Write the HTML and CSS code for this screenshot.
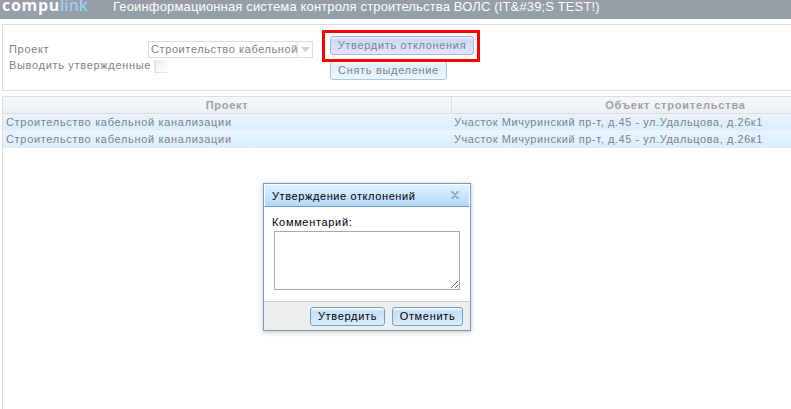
FILE: index.html
```html
<!DOCTYPE html>
<html lang="ru">
<head>
<meta charset="utf-8">
<title>Compulink</title>
<link rel="stylesheet" href="styles.css">
</head>
<body>
<header class="topbar">
  <div class="logo">compu<span>link</span></div>
  <div class="app-title">Геоинформационная система контроля строительства ВОЛС (IT&amp;#39;S TEST!)</div>
</header>
<main>
  <section class="filters">
    <div class="fields">
      <div class="field"><span class="field-label">Проект</span>
        <div class="select"><span class="select-value">Строительство кабельной</span><span class="select-arrow"><svg width="9" height="5" viewBox="0 0 9 5"><path d="M0 0H9L4.5 5Z" fill="#cbd0da"/></svg></span></div>
      </div>
      <div class="field check-field"><span>Выводить утвержденные</span><span class="checkbox"></span></div>
    </div>
    <div class="actions">
      <div class="highlight"><button class="action active">Утвердить отклонения</button></div>
      <button class="action clear">Снять выделение</button>
    </div>
  </section>
  <section class="grid">
    <div class="grid-row grid-head"><div class="cell">Проект</div><div class="cell">Объект строительства</div></div>
    <div class="grid-row"><div class="cell">Строительство кабельной канализации</div><div class="cell">Участок Мичуринский пр-т, д.45 - ул.Удальцова, д.26к1</div></div>
    <div class="grid-row"><div class="cell">Строительство кабельной канализации</div><div class="cell">Участок Мичуринский пр-т, д.45 - ул.Удальцова, д.26к1</div></div>
  </section>
</main>
<div class="dialog">
  <div class="dialog-title"><span>Утверждение отклонений</span>
    <svg class="close" width="8" height="8" viewBox="0 0 8 8"><path d="M1.5 1L6.5 7M6.5 1L1.5 7M0 1H2.5M5.5 1H8M0 7H2.5M5.5 7H8" stroke="#8da5b8" stroke-width="1.6" fill="none"/></svg>
  </div>
  <div class="dialog-body">
    <label for="comment">Комментарий:</label>
    <textarea id="comment"></textarea>
  </div>
  <div class="dialog-footer"><button>Утвердить</button><button>Отменить</button></div>
</div>
</body>
</html>
```
FILE: styles.css
```css
* { box-sizing: border-box; }
body {
  margin: 0;
  height: 409px;
  overflow: hidden;
  background: #fff;
  color: #808084;
  font: 11px/14px "Liberation Sans", Arial, sans-serif;
  letter-spacing: 0.68px;
}
button, textarea { font: inherit; letter-spacing: inherit; margin: 0; }
.topbar {
  display: flex;
  height: 19px;
  background: #969ea8;
  color: #fff;
  white-space: nowrap;
}
.logo {
  width: 111px;
  padding-left: 2px;
  font: bold 16px/11px "Open Sans", sans-serif;
  letter-spacing: 0.7px;
}
.logo span { color: #9bd0f0; font-weight: 600; letter-spacing: -0.1px; }
.app-title { padding-left: 2px; font-size: 13px; line-height: 14px; letter-spacing: 0.15px; }
main { padding: 5px 0 0 2px; }
.filters {
  display: flex;
  height: 67px;
  border: 1px solid #dadce3;
  border-right: 0;
}
.fields { width: 319px; padding: 16px 0 0 6px; }
.field { display: flex; height: 17px; white-space: nowrap; }
.field-label { width: 139px; padding-top: 1px; }
.select {
  display: flex;
  width: 165px;
  height: 17px;
  border: 1px solid #dadce3;
}
.select-value { width: 148px; padding-left: 2px; line-height: 15px; letter-spacing: 0.6px; overflow: hidden; }
.select-arrow { flex: 1; border-left: 1px solid #dadce3; padding: 5px 0 0 3px; }
.select-arrow svg { display: block; }
.checkbox {
  width: 13px;
  height: 13px;
  margin: 2px 0 0 3px;
  border: 2px solid #e1e3e7;
  border-width: 0 0 1px 2px;
  background: linear-gradient(135deg, #e4f0f8, #fff);
}
.highlight {
  position: relative;
  width: 158px;
  height: 32px;
  margin-top: 5px;
  padding: 3px 3px 3px 5px;
  border: 3px solid #fe0000;
}
.action {
  display: block;
  height: 19px;
  padding: 0;
  border: 1px solid #a9c7e4;
  border-radius: 3px;
  background: linear-gradient(#fff, #deeefa 20%, #edf7fe);
  color: #808084;
  line-height: 17px;
  white-space: nowrap;
}
.active {
  width: 144px;
  border-color: #a7b3e5;
  background: linear-gradient(#eeeeff, #d0d8fa 20%, #e0e5ff);
}
.clear { width: 117px; margin: -1px 0 0 8px; line-height: 15px; }
.grid {
  height: 330px;
  margin-top: 5px;
  border: 1px solid #dadce3;
  border-right: 0;
}
.grid-row {
  display: grid;
  grid-template-columns: 449px 1fr;
  height: 17px;
  border-bottom: 1px solid #ececec;
  background: linear-gradient(#e8f4ff, #dbeeff);
  line-height: 17px;
  white-space: nowrap;
}
.cell { padding-left: 3px; border-right: 1px solid #e5edf4; }
.cell:last-child { border-right: 0; padding-left: 2px; letter-spacing: 0.56px; }
.grid-head {
  background: linear-gradient(#f5f7fb, #ebeff4);
  border-bottom-color: #e2dcdb;
  color: #a0a0a4;
  font-weight: bold;
  text-align: center;
}
.grid-head .cell { border-color: #dadce3; padding: 0; }
.grid-head .cell:last-child { padding-left: 108px; letter-spacing: 0.8px; }
.dialog {
  position: absolute;
  left: 263px;
  top: 183px;
  width: 208px;
  height: 148px;
  border: 1px solid #769dc0;
  background: #fff;
  box-shadow: 0 1px 5px rgba(0, 0, 0, 0.25);
  color: #000;
  display: flex;
  flex-direction: column;
}
.dialog-title {
  display: flex;
  justify-content: space-between;
  height: 23px;
  padding: 4px 10px 0 7px;
  border: 1px solid #fff;
  border-bottom: 1px solid #769dc0;
  background: linear-gradient(#e1f1ff, #b1d8ff);
  line-height: 14px;
  letter-spacing: 0.6px;
  white-space: nowrap;
}
.close { margin-top: 2px; }
.dialog-body { height: 94px; padding: 8px 8px 0; }
.dialog-body label { display: block; }
.dialog-body textarea {
  display: block;
  width: 186px;
  height: 59px;
  margin: 2px 0 0 2px;
  border: 1px solid #a9a9a9;
  background: #fff;
}
.dialog-footer {
  flex: 1;
  display: flex;
  justify-content: flex-end;
  gap: 7px;
  padding: 5px 7px 0;
  border-top: 1px solid #d3d3d3;
  background: #eee;
}
.dialog-footer button {
  width: 75px;
  height: 19px;
  padding: 0;
  border: 1px solid #769dc0;
  border-radius: 3px;
  background: linear-gradient(#fff, #c4dff7 20%, #dcecff);
  color: #000;
  line-height: 17px;
  white-space: nowrap;
}
.dialog-footer button:last-child { width: 71px; }
```
